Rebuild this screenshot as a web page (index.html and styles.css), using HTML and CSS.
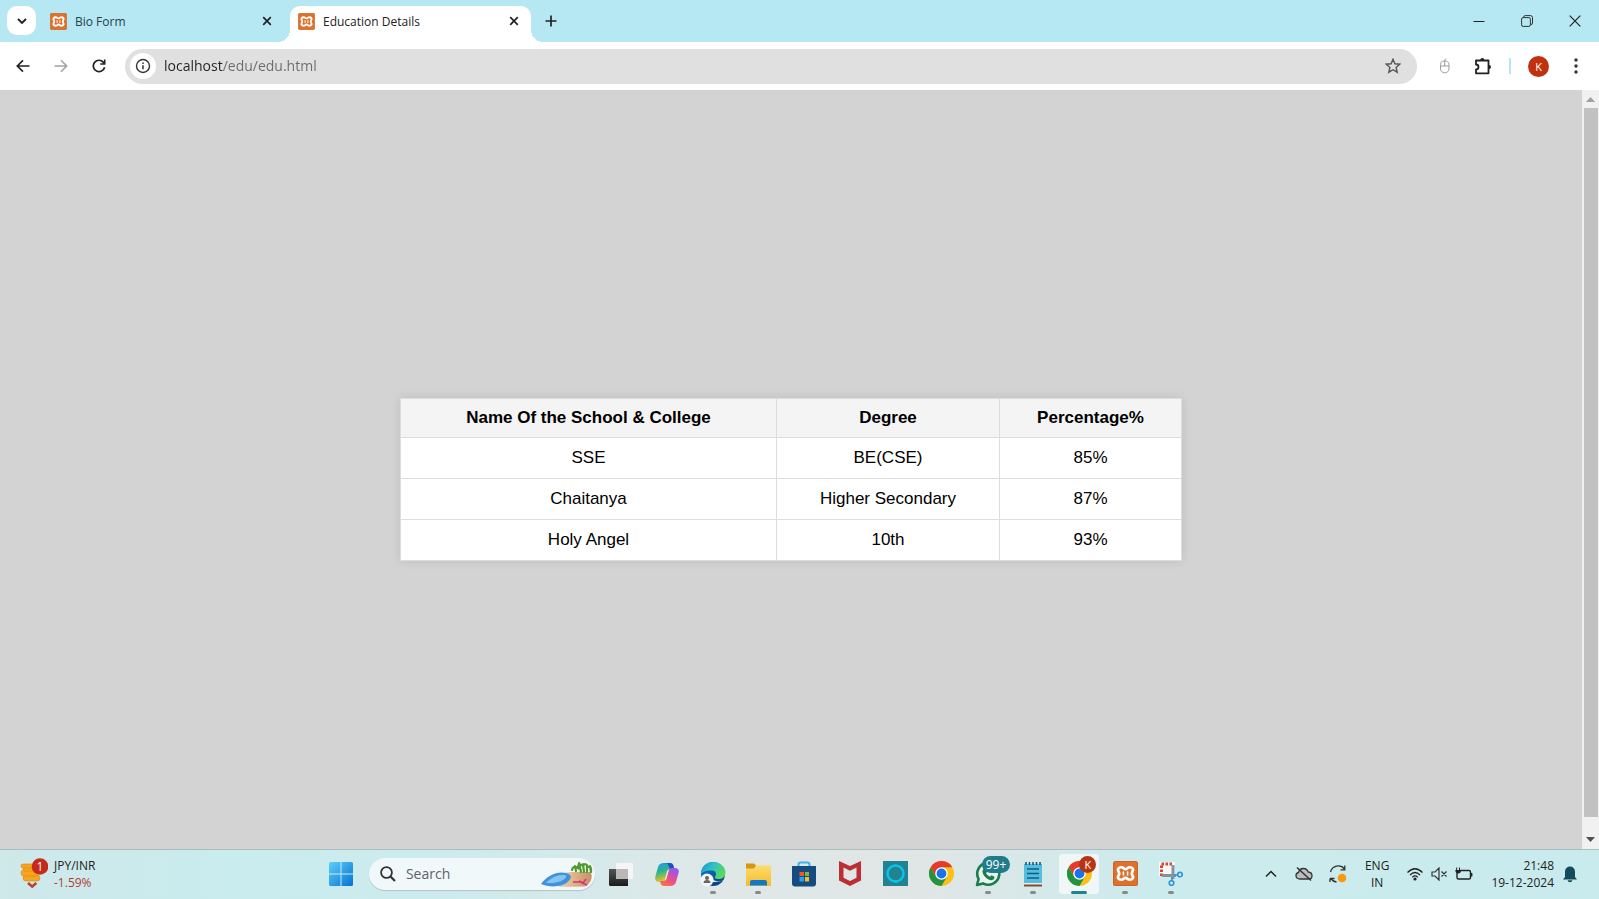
FILE: index.html
```html
<!DOCTYPE html>
<html lang="en">
<head>
<meta charset="utf-8">
<title>Education Details</title>
<link rel="stylesheet" href="styles.css">
</head>
<body>
<svg class="defs" aria-hidden="true">
  <defs>
    <linearGradient id="win" x1="0" y1="0" x2="1" y2="1"><stop offset="0" stop-color="#5cd0fb"/><stop offset="1" stop-color="#0672d0"/></linearGradient>
    <linearGradient id="cop1" x1="0" y1="0" x2="0.3" y2="1"><stop offset="0" stop-color="#1e9bea"/><stop offset="0.5" stop-color="#2fb58a"/><stop offset="1" stop-color="#f3c51a"/></linearGradient>
    <linearGradient id="cop2" x1="0.6" y1="0" x2="0" y2="1"><stop offset="0" stop-color="#9a56ea"/><stop offset="0.5" stop-color="#ec4f87"/><stop offset="1" stop-color="#fa7c3c"/></linearGradient>
    <linearGradient id="edge1" x1="0" y1="0" x2="1" y2="0.5"><stop offset="0" stop-color="#1d8fd8"/><stop offset="0.5" stop-color="#2dc3c6"/><stop offset="1" stop-color="#5cd95a"/></linearGradient>
    <linearGradient id="edge2" x1="0" y1="0" x2="0.7" y2="1"><stop offset="0" stop-color="#1380d2"/><stop offset="1" stop-color="#0b3f83"/></linearGradient>
    <linearGradient id="folder" x1="0" y1="0" x2="0" y2="1"><stop offset="0" stop-color="#fddc69"/><stop offset="1" stop-color="#f5bb32"/></linearGradient>
    <linearGradient id="dark" x1="0" y1="0" x2="0" y2="1"><stop offset="0" stop-color="#555"/><stop offset="1" stop-color="#1b1b1b"/></linearGradient>
    <linearGradient id="sand" x1="0" y1="0" x2="1" y2="0"><stop offset="0" stop-color="#f0d3ac"/><stop offset="1" stop-color="#c98f63"/></linearGradient>
    <symbol id="xampp" viewBox="0 0 24 24">
      <rect x="0.5" y="0.5" width="23" height="23" rx="2" fill="#e0712c" stroke="#c9652b"/>
      <path d="M8 6C10.200 6 10.200 7.800 12 7.800S13.800 6 16 6c3 0 4 2.200 2.700 4-.8 1.200-.8 2.800 0 4 1.300 1.800.3 4-2.700 4-2.200 0-2.200-1.800-4-1.800S10.200 18 8 18c-3 0-4-2.200-2.700-4 .8-1.200.8-2.800 0-4C4 8.200 5 6 8 6Z" fill="#e0712c" stroke="#fff" stroke-width="2.600"/>
      <path d="M10 10.500v3M14 10.500v3" stroke="#fff" stroke-width="1.500" stroke-linecap="round"/>
    </symbol>
    <symbol id="chrome" viewBox="0 0 24 24">
      <circle cx="12" cy="12" r="12" fill="#fbc116"/>
      <path d="M1.600 6A12 12 0 0 1 22.400 6H12L6.800 15Z" fill="#e33b2e"/>
      <path d="M1.600 6A12 12 0 0 0 12 24l5.200-9H6.800Z" fill="#229342"/>
      <circle cx="12" cy="12" r="6" fill="#fff"/><circle cx="12" cy="12" r="4.700" fill="#1a73e8"/>
    </symbol>
    <symbol id="x" viewBox="0 0 10 10"><path d="m1.200 1.200 7.600 7.600m0-7.600L1.200 8.800" fill="none" stroke="currentColor" stroke-width="1.700"/></symbol>
  </defs>
</svg>

<div class="screen">
  <header class="tabstrip">
    <button class="tab-search" aria-label="Search tabs"><svg width="10" height="8" viewBox="0 0 10 8"><path d="m1 2 4 4 4-4" fill="none" stroke="#222" stroke-width="1.900"/></svg></button>
    <div class="tab">
      <svg class="favicon"><use href="#xampp"/></svg><span class="tab-title">Bio Form</span>
      <button class="tab-close" aria-label="Close Bio Form"><svg width="10" height="10"><use href="#x"/></svg></button>
    </div>
    <div class="tab tab-active">
      <svg class="favicon"><use href="#xampp"/></svg><span class="tab-title">Education Details</span>
      <button class="tab-close" aria-label="Close Education Details"><svg width="10" height="10"><use href="#x"/></svg></button>
    </div>
    <button class="new-tab" aria-label="New tab"><svg width="12" height="12" viewBox="0 0 12 12"><path d="M6 .5v11M.5 6h11" stroke="#222" stroke-width="1.700"/></svg></button>
    <div class="window-controls">
      <button aria-label="Minimize"><svg width="12" height="12" viewBox="0 0 12 12"><path d="M.5 6.500h11" stroke="#222"/></svg></button>
      <button aria-label="Restore"><svg width="12" height="12" viewBox="0 0 12 12" fill="none" stroke="#333"><rect x=".6" y="2.600" width="8.800" height="8.800" rx="1.500"/><path d="M2.800 2.500V2A1.400 1.400 0 0 1 4.200.6H9.500a2 2 0 0 1 2 2V8a1.400 1.400 0 0 1-1.900 1.300"/></svg></button>
      <button aria-label="Close"><svg width="12" height="12" viewBox="0 0 12 12"><path d="m.7.7 10.600 10.600m0-10.600L.7 11.300" stroke="#222" stroke-width="1.200"/></svg></button>
    </div>
  </header>

  <div class="toolbar">
    <nav class="nav">
      <button aria-label="Back"><svg width="14" height="14" viewBox="0 0 14 14"><path d="M13.500 7H1.500M7 1.300 1.300 7 7 12.700" fill="none" stroke="#222" stroke-width="1.700"/></svg></button>
      <button aria-label="Forward"><svg width="14" height="14" viewBox="0 0 14 14"><path d="M.5 7h12M7 1.300 12.700 7 7 12.700" fill="none" stroke="#a3a3a3" stroke-width="1.600"/></svg></button>
      <button aria-label="Reload"><svg width="14" height="14" viewBox="0 0 14 14"><path d="M12.600 8.200A5.700 5.700 0 1 1 11.500 3.400L12.300 4.500" fill="none" stroke="#222" stroke-width="1.700"/><path d="M13.500.6v5.200H8.300V4.200h3.600V.6Z" fill="#222"/></svg></button>
    </nav>
    <form class="omnibox">
      <button type="button" class="site-info" aria-label="View site information"><svg width="16" height="16" viewBox="0 0 16 16"><circle cx="8" cy="8" r="6.500" fill="none" stroke="#333" stroke-width="1.400"/><path d="M8 7.200v4M8 4.400V6" stroke="#333" stroke-width="1.500"/></svg></button>
      <input class="url" type="text" aria-label="Address" value="localhost/edu/edu.html">
      <button type="button" class="star" aria-label="Bookmark"><svg width="16" height="16" viewBox="0 0 16 16"><path d="m8 1.300 1.900 4.500 4.900.4-3.700 3.200 1.100 4.800L8 11.700l-4.200 2.500 1.100-4.800L1.200 6.200l4.900-.4Z" fill="none" stroke="#555" stroke-width="1.400"/></svg></button>
    </form>
    <div class="actions">
      <button aria-label="Mouse extension"><svg width="12" height="16" viewBox="0 0 12 16" fill="none" stroke="#999"><path d="M1.500 7.500C1.500 4 2.500 3 5.500 3s4.500 1 4.500 4.500v3.300a4.250 4 0 0 1-8.500 0ZM1.500 8h8.500M5.700 8V3c0-1.700.8-2 1.600-2"/></svg></button>
      <button class="extensions" aria-label="Extensions"><svg width="18" height="18" viewBox="0 0 18 18"><path d="M2 3.500h12.500v12.800H2v-3.800a2 2 0 0 0 0-5Z" fill="none" stroke="#222" stroke-width="1.800" stroke-linejoin="round"/><path d="M6.300 3a2 2 0 0 1 4 0ZM15 8a2 2 0 0 1 0 4Z" fill="#222"/></svg></button>
      <span class="divider"></span>
      <button class="avatar" aria-label="Profile K">K</button>
      <button aria-label="Menu"><svg width="4" height="16" viewBox="0 0 4 16" fill="#333"><circle cx="2" cy="2" r="1.700"/><circle cx="2" cy="8" r="1.700"/><circle cx="2" cy="14" r="1.700"/></svg></button>
    </div>
  </div>

  <div class="viewport">
    <main class="page">
      <table class="education">
        <colgroup><col class="col-school"><col class="col-degree"><col class="col-percent"></colgroup>
        <thead><tr><th>Name Of the School &amp; College</th><th>Degree</th><th>Percentage%</th></tr></thead>
        <tbody>
          <tr><td>SSE</td><td>BE(CSE)</td><td>85%</td></tr>
          <tr><td>Chaitanya</td><td>Higher Secondary</td><td>87%</td></tr>
          <tr><td>Holy Angel</td><td>10th</td><td>93%</td></tr>
        </tbody>
      </table>
    </main>
    <div class="scrollbar" aria-hidden="true">
      <svg width="9" height="5" viewBox="0 0 9 5"><path d="M0 5 4.500 0 9 5Z" fill="#a0a0a0"/></svg>
      <span class="thumb"></span>
      <svg width="9" height="5" viewBox="0 0 9 5"><path d="M0 0 4.500 5 9 0Z" fill="#505050"/></svg>
    </div>
  </div>

  <footer class="taskbar">
    <button class="widget">
      <svg width="28" height="32" viewBox="0 0 28 32"><g fill="#f6a51f" stroke="#dc8415" stroke-width=".6"><rect x="3" y="17" width="17" height="6" rx="3"/><rect x="1" y="12" width="17" height="6" rx="3"/><rect x="3" y="8" width="17" height="5" rx="2.500"/><rect x="1" y="6" width="15" height="4" rx="2"/></g><path d="m8 25 4.200 3.500 4.200-3.500" fill="none" stroke="#b8422b" stroke-width="2.500"/><circle cx="20" cy="8.500" r="8.300" fill="#c42b1c"/><text x="20" y="12.500" class="badge-text">1</text></svg>
      <span class="rate"><span>JPY/INR</span><span class="loss">-1.59%</span></span>
    </button>
    <button class="start" aria-label="Start"><svg width="24" height="24" viewBox="0 0 24 24" fill="url(#win)"><path d="M1.500 0h10v11.500H0V1.500A1.500 1.500 0 0 1 1.500 0ZM12.500 0h10A1.500 1.500 0 0 1 24 1.500v10H12.500ZM0 12.500h11.500V24h-10A1.500 1.500 0 0 1 0 22.500ZM12.500 12.500H24v10a1.500 1.500 0 0 1-1.500 1.500h-10Z"/></svg></button>
    <label class="search">
      <svg width="16" height="16" viewBox="0 0 16 16"><circle cx="6.500" cy="6.500" r="5.400" fill="none" stroke="#333" stroke-width="1.800"/><path d="m10.500 10.500 4.500 4.500" stroke="#333" stroke-width="2.200"/></svg>
      <input type="search" placeholder="Search" aria-label="Search">
      <svg width="52" height="28" viewBox="0 0 52 28"><path d="M18 14q8-2 14-2h17.500q2.500 5-.5 10-2 3.500-5 4.500l-26 .5Z" fill="url(#sand)"/><path d="M0 24C7 15 16 11 25 13c6 1.500 6 5 2 8.500C22 27 9 28 0 24Z" fill="#3f93da"/><path d="M5 23c6-6 13-9 20-7.500 2 3-7 8.500-20 7.500Z" fill="#86c5f1"/><path d="M32 22h9m-3-1 8 4m-5-1 4-5" stroke="#d8337a" fill="none" stroke-width="1.500"/><path d="M31 10q1-5 6-2 0-6 5-2 3-4 5 1 4-1 3 5M35 11l-1-5m6 6-2-9m5 9-1-8m4 8V5m4 7-1-6" fill="none" stroke="#4e9a2f" stroke-width="2.200" stroke-linecap="round"/></svg>
    </label>
    <div class="apps">
      <button aria-label="Task view"><svg width="24" height="24" viewBox="0 0 24 24"><rect x="7" y="1" width="17" height="16" rx="1" fill="#f5f5f5"/><path d="M0 7h19v17H1.500A1.500 1.500 0 0 1 0 22.500Z" fill="url(#dark)"/><path d="M7 7h12v10H7Z" fill="#b8b8b8"/></svg></button>
      <button aria-label="Copilot"><svg width="24" height="24" viewBox="0 0 24 24"><path d="M9 1h6c2 0 3 1 3.500 3l.8 3H16c-2 0-3 1-3.500 3l-2 7C10 19 9 20 7 20H4c-3 0-4.500-2-3.500-6l2.500-9C4 2.300 5.500 1 9 1Z" fill="url(#cop1)"/><path d="M9 1h6c2 0 3 1 3.500 3l.8 3H15L12.500 1.500Z" fill="#214fc5"/><path d="M15 24H9c-2 0-3-1-3.500-3L5 19h3c2 0 3-1 3.500-3l2-7C14 7 15 6 17 6h3c3 0 4.500 2 3.500 5L21 20c-1 2.700-2.500 4-6 4Z" fill="url(#cop2)"/><path d="m12 9 2-2-2.500 10-2 2Z" fill="#eee" opacity=".8"/></svg></button>
      <button class="running" aria-label="Edge"><svg width="26" height="26" viewBox="0 0 26 26"><circle cx="13" cy="13" r="12" fill="url(#edge2)"/><path d="M1 13C1 5 7 1 13 1c7 0 12.500 5 12.500 10.500 0 5-4 7-8 6.500-3-.5-3-2-2-3 1-1.500 1-5-3.500-5.500C7 9 2 11 1 13Z" fill="url(#edge1)"/><path d="M12 14c-1 5 4 8 12 5-4 2-11 2-11 2Z" fill="#e1e8e8"/><circle cx="7" cy="19" r="6.500" fill="#f5f5f5"/><circle cx="7" cy="17" r="2" fill="#666"/><path d="M3.500 22q0-3 3.500-3t3.500 3Z" fill="#666"/></svg></button>
      <button class="running" aria-label="File Explorer"><svg width="26" height="24" viewBox="0 0 26 24"><path d="M1 1.500h8l3 3h-2L9 8H1Z" fill="#d79513"/><path d="M1 6.500h8l3-3h14V24H1Z" fill="url(#folder)"/><path d="M5 23.500V20q0-2 2-2h13q2 0 2 2v3.500Z" fill="#1476c8"/></svg></button>
      <button aria-label="Microsoft Store"><svg width="24" height="26" viewBox="0 0 24 26"><path d="M6.500 6V3.500q0-2 2-2h7q2 0 2 2V6" fill="none" stroke="#39b4ed" stroke-width="2"/><path d="M0 5h24v17.500q0 3-3 3H3q-3 0-3-3Z" fill="#174b80"/><path d="M7.500 11H12v4H7.500Z" fill="#f1562d"/><path d="M13 11h4v4h-4Z" fill="#7fba2c"/><path d="M7.500 16H12v4.500H7.500Z" fill="#20a5ec"/><path d="M13 16h4v4.500h-4Z" fill="#fdba23"/></svg></button>
      <button aria-label="McAfee"><svg width="22" height="25" viewBox="0 0 22 25"><path d="m0 0 11 5L22 0v19.500L11 25 0 19.500Zm4.500 6.500v10.300L11 20l6.500-3.200V6.500L11 9.800Z" fill="#bd2e34" fill-rule="evenodd"/></svg></button>
      <button aria-label="Alexa"><svg width="25" height="25" viewBox="0 0 25 25"><path d="M0 0h25v25H0Z" fill="#23828f"/><circle cx="12.500" cy="12.500" r="8" fill="none" stroke="#08c3e6" stroke-width="2.600"/><path d="m9 19 3 3h2l3-3Z" fill="#08c3e6"/></svg></button>
      <button aria-label="Chrome"><svg width="25" height="25"><use href="#chrome"/></svg></button>
      <button class="running" aria-label="WhatsApp, 99+ messages"><svg width="26" height="26" viewBox="0 0 26 26"><path d="M2 24 3.600 18A11 11 0 1 1 8 22.400Z" fill="#e9f4ef" stroke="#1b7c4e" stroke-width="2.600" stroke-linejoin="round"/><path d="M9 7.500q2-1 2.500 1l.7 2-1.200 1.700q1.500 2.500 4 3.600l1.500-1.500 3 1.500q0 3-3 3.500C12 19 7.500 14 7.500 10.500Q7.500 8.500 9 7.500Z" fill="#1b7c4e"/></svg><span class="badge">99+</span></button>
      <button class="running" aria-label="Notepad"><svg width="20" height="26" viewBox="0 0 20 26"><path d="M1 3h18v19H1Z" fill="#54bde0"/><path d="M1 22h18v1.500H1Z" fill="#f2efe9"/><path d="M1 23.500h18v2H1Z" fill="#8a4b2d"/><path d="M3 1v3M6.500 1v3M10 1v3M13.500 1v3M17 1v3" stroke="#184e6c" stroke-width="1.500"/><path d="M4 8h12M4 12.500h12M4 17h12" stroke="#0e5e84" stroke-width="1.600"/></svg></button>
      <button class="running current" aria-label="Chrome, Education Details"><svg width="25" height="25"><use href="#chrome"/></svg><span class="badge profile">K</span></button>
      <button class="running" aria-label="XAMPP"><svg width="25" height="25"><use href="#xampp"/></svg></button>
      <button class="running" aria-label="Snipping Tool"><svg width="24" height="26" viewBox="0 0 24 26"><path d="M0 1h16v14H0Z" fill="#f8f8f8"/><path d="M13 3H2.500v12" fill="none" stroke="#cf4b31" stroke-width="3" stroke-dasharray="2.500 1.500"/><path d="M14 4v14M3 14.500h14" stroke="#8a9298" stroke-width="3"/><circle cx="21" cy="13.500" r="2.300" fill="none" stroke="#2795dc" stroke-width="1.600"/><circle cx="12.500" cy="22" r="2.300" fill="none" stroke="#2795dc" stroke-width="1.600"/><path d="M15 14h4m-6 2v4" stroke="#2795dc" stroke-width="1.600"/></svg></button>
    </div>
    <div class="tray">
      <button aria-label="Show hidden icons"><svg width="12" height="8" viewBox="0 0 12 8"><path d="m1 6.500 5-5 5 5" fill="none" stroke="#222" stroke-width="1.500"/></svg></button>
      <button aria-label="OneDrive"><svg width="18" height="16" viewBox="0 0 18 16"><path d="M5 13q-4 0-4-3.500Q1 7 3.500 6.500 4.500 2.500 8.500 2.500q3.500 0 4.700 3.500Q17 6.500 17 9.700 17 13 13.500 13Z" fill="#bdbdbd" stroke="#333" stroke-width="1.300"/><path d="m2 1.500 14 13" stroke="#333" stroke-width="1.500"/></svg></button>
      <button class="update" aria-label="Windows Update"><svg width="18" height="18" viewBox="0 0 18 18"><path d="M1.500 7A8 8 0 0 1 15.500 4M15.800.5v4.300h-4.300M1 13.500V17m0-3.500h4.500M1.500 13.500q2.500 3 6 3.500" fill="none" stroke="#333" stroke-width="1.300"/><circle cx="13" cy="13" r="4.300" fill="#f79911"/></svg></button>
      <button class="language"><span>ENG</span><span>IN</span></button>
      <button class="status" aria-label="Network, sound and battery">
        <svg width="16" height="14" viewBox="0 0 16 14"><path d="M.5 5.500Q8-2 15.500 5.500M3 8q5-5 10 0M5.300 10.200q2.700-2.500 5.400 0" fill="none" stroke="#222" stroke-width="1.200"/><circle cx="8" cy="12" r="1.600" fill="#222"/></svg>
        <svg width="16" height="14" viewBox="0 0 16 14"><path d="M1 5h3l4-4v12L4 9H1ZM10.500 4.500l5 5m0-5-5 5" fill="none" stroke="#333" stroke-width="1.200"/></svg>
        <svg width="18" height="14" viewBox="0 0 18 14"><path d="M5 3.500h9q1.500 0 1.500 1.500v5.500q0 1.500-1.500 1.500H3.500Q2 12 2 10.500V6M16.700 6v3.500" fill="none" stroke="#222" stroke-width="1.400"/><path d="M.3 3H6q0 3.500-2.800 3.500T.3 3ZM1.200.5h1V3h-1ZM4 .5h1V3H4Z" fill="#222"/></svg>
      </button>
      <button class="clock"><span>21:48</span><span>19-12-2024</span></button>
      <button class="bell" aria-label="Notifications"><svg width="14" height="18" viewBox="0 0 14 18"><path d="M2 12V6.500a5 5 0 0 1 10 0V12l2 2.500H0ZM4.500 15.300h5q-.5 2-2.500 2t-2.500-2Z" fill="#124c5c"/></svg></button>
    </div>
  </footer>
</div>
</body>
</html>
```
FILE: styles.css
```css
* { box-sizing: border-box; }
body { margin: 0; font-family: "Open Sans", "Noto Sans", sans-serif; color: #222; }
button { border: 0; padding: 0; background: none; font: inherit; color: inherit; display: flex; align-items: center; justify-content: center; }
input { border: 0; outline: 0; padding: 0; background: none; font: inherit; min-width: 0; }
svg { display: block; flex: none; }
.defs { position: absolute; width: 0; height: 0; }
.screen { height: 100vh; display: flex; flex-direction: column; overflow: hidden; }

/* Tab strip */
.tabstrip { flex: none; height: 42px; display: flex; align-items: flex-end; padding-left: 7px; background: #b5e8f3; font-size: 12px; }
.tab-search { width: 29px; height: 29px; margin-bottom: 7px; border-radius: 10px; background: #fff; }
.tab { position: relative; width: 241px; height: 36px; display: flex; align-items: center; gap: 8px; padding: 0 10px 6px 8px; color: #24414a; }
.tab:first-of-type { width: 242px; margin: 0 6px; }
.tab-active { background: #fff; border-radius: 10px 10px 0 0; color: #222; }
.tab-active::before, .tab-active::after { content: ""; position: absolute; bottom: 0; width: 12px; height: 12px; }
.tab-active::before { right: 100%; background: radial-gradient(circle at 0 0, transparent 12px, #fff 12px); }
.tab-active::after { left: 100%; background: radial-gradient(circle at 100% 0, transparent 12px, #fff 12px); }
.favicon { width: 17px; height: 17px; }
.tab-title { flex: 1; }
.tab-close { width: 14px; height: 14px; color: #222; }
.new-tab { width: 28px; height: 28px; margin: 0 0 7px 6px; }
.window-controls { display: flex; margin-left: auto; height: 42px; }
.window-controls button { width: 48px; }

/* Toolbar */
.toolbar { flex: none; height: 48px; display: flex; align-items: center; padding: 0 17px 0 4px; background: #fff; }
.nav { display: flex; }
.nav button { width: 38px; height: 32px; }
.omnibox { flex: 1; height: 35px; display: flex; align-items: center; padding: 0 16px 0 5px; margin-left: 7px; border-radius: 18px; background: #e0e0e0; }
.site-info { width: 26px; height: 26px; border-radius: 50%; background: #fff; }
.url { flex: 1; margin-left: 8px; font-size: 14px; line-height: 24px; background: linear-gradient(90deg, #222 59px, #6a6a6a 59px); -webkit-background-clip: text; background-clip: text; -webkit-text-fill-color: transparent; }
.star { width: 16px; height: 24px; }
.actions { display: flex; align-items: center; margin-left: 22px; gap: 17px; }
.actions button { min-width: 12px; }
.actions .extensions { margin-left: 6px; }
.divider { width: 2px; height: 16px; background: #b5e8f3; }
.actions .avatar { width: 21px; height: 21px; margin-right: 4px; border-radius: 50%; background: #c0320d; color: #fff; font-size: 11px; }

/* Page */
.viewport { flex: 1; min-height: 0; display: flex; background: #d3d3d3; }
.page { flex: 1; display: flex; align-items: center; justify-content: center; padding-top: 19px; }
.education { width: 782px; height: 163px; border-collapse: collapse; table-layout: fixed; background: #fff; box-shadow: 0 0 10px rgba(0, 0, 0, 0.1); font-family: "Liberation Sans", Arial, sans-serif; font-size: 17px; line-height: 18px; color: #000; text-align: center; }
.education th, .education td { border: 1px solid #ddd; padding: 10px; }
.education th { background: #f4f4f4; }
.col-school { width: 376px; }
.col-degree { width: 223px; }
.scrollbar { width: 17px; display: flex; flex-direction: column; align-items: center; gap: 6px; padding: 7px 0; background: #f1f1f1; }
.thumb { flex: 1; width: 14px; margin-bottom: 14px; background: #c1c1c1; }

/* Taskbar */
.taskbar { flex: none; height: 50px; display: flex; align-items: center; padding: 0 22px 2px 20px; border-top: 1px solid #a9bcbf; background: linear-gradient(90deg, #cfe8ea, #c9ecee 14%, #cdebed 28%, #dfe7e7 45%, #e0e6e6 58%, #ccebed 72%, #c9ebed); }
.widget { flex: 1; justify-content: flex-start; gap: 6px; font-size: 12px; line-height: 17px; }
.widget .rate, .language, .clock { display: flex; flex-direction: column; }
.rate { text-align: left; }
.loss { color: #b23b34; }
.badge-text { fill: #fff; font-size: 12px; text-anchor: middle; }
.search { width: 226px; height: 32px; margin: 0 3px 0 16px; display: flex; align-items: center; gap: 10px; padding: 0 2px 0 11px; border-radius: 16px; background: #f1f8f9; box-shadow: 0 1px 1px #b5c3c5; }
.search input { flex: 1; width: 0; font-size: 14px; }
.search input::placeholder { color: #5d6365; opacity: 1; }
.apps { width: 596px; height: 47px; display: grid; grid-template-columns: repeat(13, 1fr); align-items: center; }
.apps button { position: relative; height: 40px; margin: 0 3px; border-radius: 4px; }
.apps .running::after { content: ""; position: absolute; bottom: 0; left: 50%; width: 6px; height: 3px; margin-left: -3px; border-radius: 2px; background: #858b8c; }
.apps .current { background: #f0f7f8; }
.apps .current::after { width: 16px; margin-left: -8px; background: #23828f; }
.badge { position: absolute; top: 2px; left: 14px; height: 17px; padding: 0 4px; border-radius: 9px; background: #1f7d8b; color: #fff; font-size: 12px; line-height: 17px; }
.badge.profile { width: 17px; left: 20px; background: #b83512; font-size: 11px; text-align: center; }
.tray { display: flex; align-items: center; gap: 18px; margin-left: 71px; font-size: 12px; line-height: 17px; }
.update { margin-left: -2px; }
.language { align-items: center; }
.status { gap: 8px; }
.clock { align-items: flex-end; }
.bell { margin-left: -9px; }
```
